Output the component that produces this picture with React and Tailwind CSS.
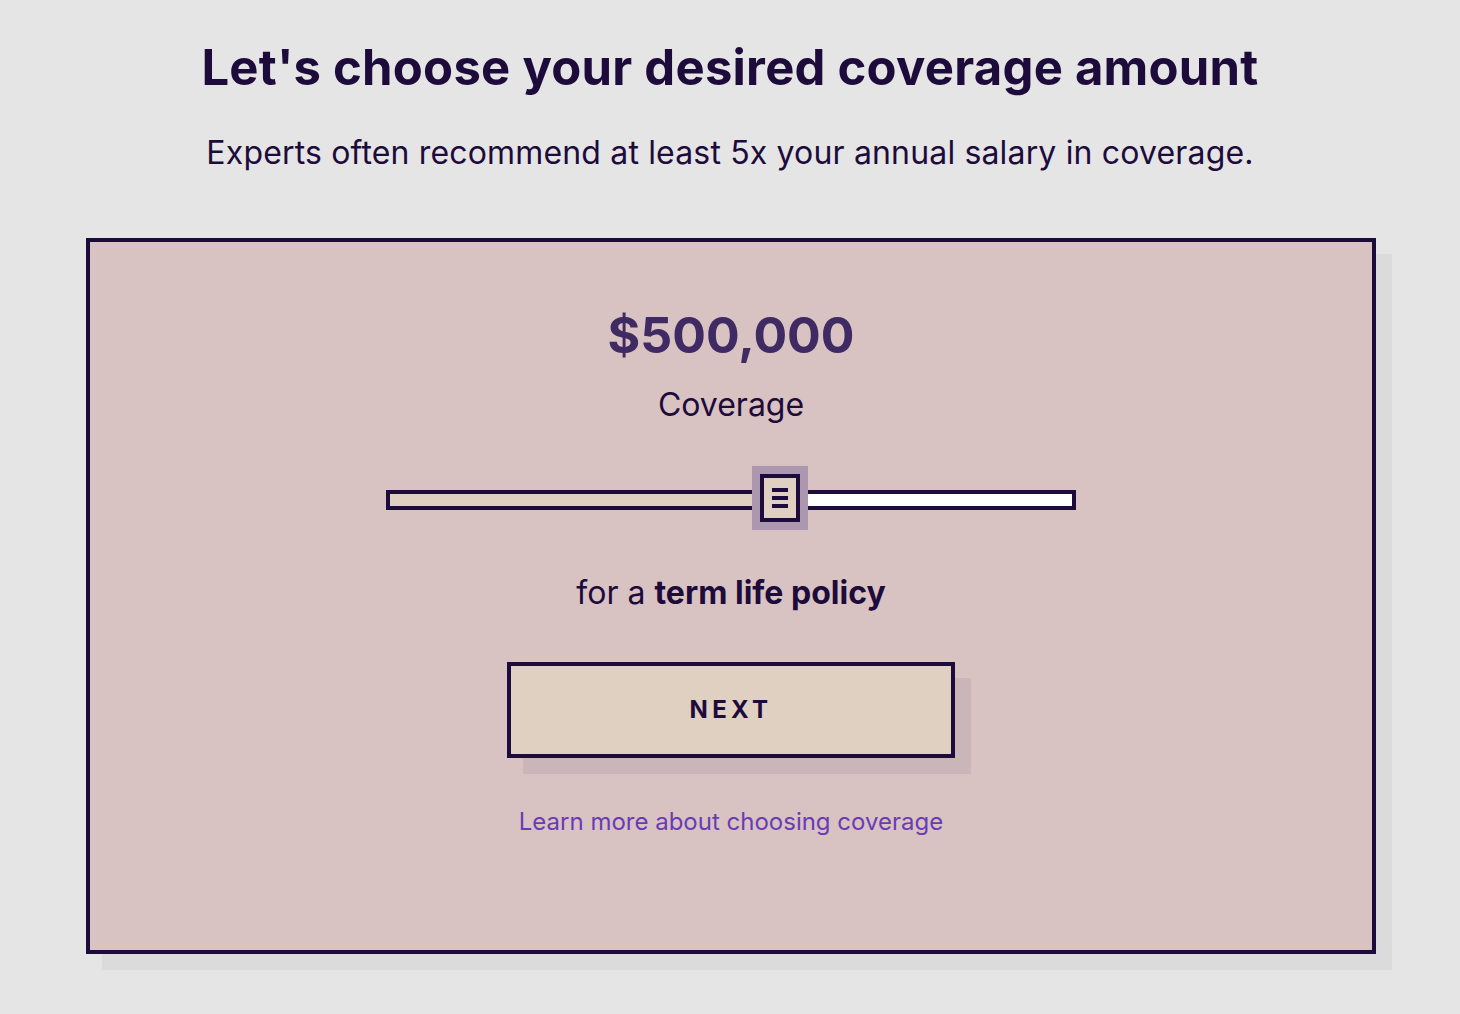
import { useState } from 'react';

const CoverageSlider = ({ value }) => {
  // track is 690px wide, thumb centre sits at 394px from the left edge
  const fill = value;
  return (
    <div className="relative mx-auto h-[64px] w-[690px]">
      <div className="absolute left-0 right-0 top-[24px] flex h-[20px] border-4 border-[#1d0b3b]">
        <div className="h-full bg-[#e0d0c2]" style={{ width: fill - 4 }}></div>
        <div className="h-full flex-1 bg-white"></div>
      </div>
      <div
        className="absolute top-0 flex h-[64px] w-[56px] items-center justify-center bg-[#ab98ae]"
        style={{ left: fill - 28 }}
      >
        <div className="flex h-[48px] w-[40px] flex-col items-center justify-center gap-[4px] border-4 border-[#1d0b3b] bg-[#e0d0c2]">
          <span className="h-[4px] w-[16px] bg-[#1d0b3b]"></span>
          <span className="h-[4px] w-[16px] bg-[#1d0b3b]"></span>
          <span className="h-[4px] w-[16px] bg-[#1d0b3b]"></span>
        </div>
      </div>
    </div>
  );
};

const App = () => {
  const [amount] = useState(500000);

  return (
    <div className="min-h-[1014px] w-full bg-[#e5e5e5] font-['Inter',sans-serif] text-[#1d0b3b]">
      <h1 className="pt-[39px] text-center text-[49px] font-bold leading-[58px] tracking-[0.005em]">
        Let's choose your desired coverage amount
      </h1>
      <p className="mt-[37px] text-center text-[32px] leading-[38px] tracking-[0.005em]">
        Experts often recommend at least 5x your annual salary in coverage.
      </p>

      <div className="ml-[86px] mt-[66px] w-[1290px] border-4 border-[#1d0b3b] bg-[#d8c2c2] pb-[113px] pt-[63px] text-center shadow-[16px_16px_0_#dbdbdb]">
        <div className="text-[50px] font-bold leading-[60px] text-[#3f2a63]">
          ${amount.toLocaleString('en-US')}
        </div>
        <div className="mt-[21px] text-[32px] leading-[38px]">Coverage</div>

        <div className="mt-[42px]">
          <CoverageSlider value={394} />
        </div>

        <p className="mt-[44px] text-[32px] leading-[38px]">
          for a <span className="font-bold">term life policy</span>
        </p>

        <button className="mx-auto mt-[50px] flex h-[96px] w-[448px] items-center justify-center border-4 border-[#1d0b3b] bg-[#e0d0c2] text-[24px] font-bold tracking-[0.18em] shadow-[16px_16px_0_#cab6b8]">
          NEXT
        </button>

        <a href="#" className="mt-[49px] block text-[24px] leading-[30px] text-[#6a3bb5]">
          Learn more about choosing coverage
        </a>
      </div>
    </div>
  );
};

export default App;
